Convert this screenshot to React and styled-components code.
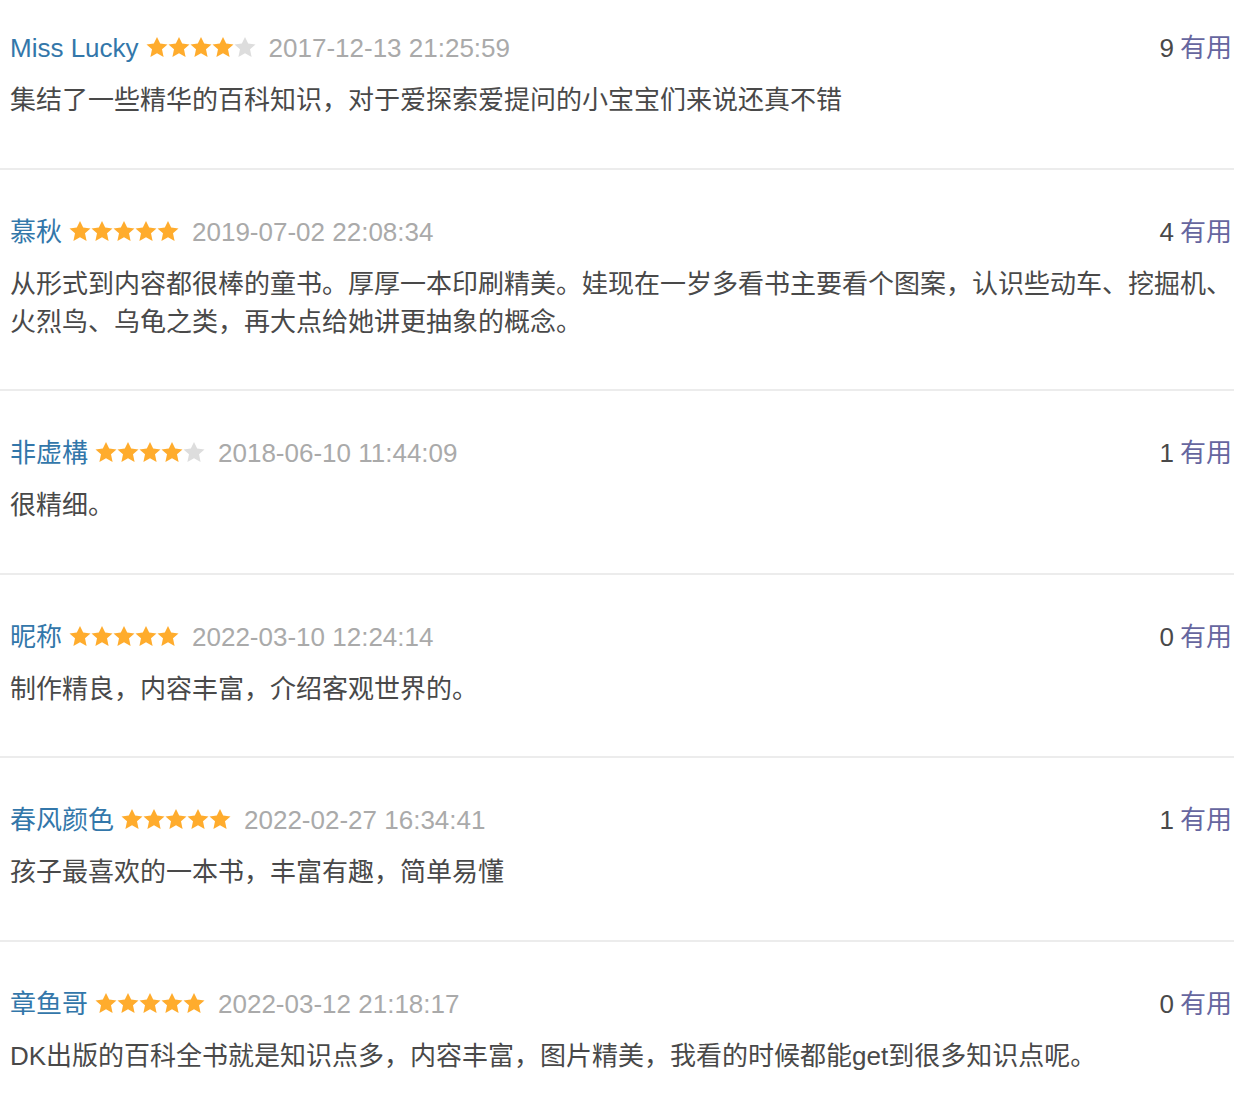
import React from "react";
import styled, { createGlobalStyle } from "styled-components";

const Global = createGlobalStyle`
  html, body { margin: 0; padding: 0; background: #fff; }
  body { font-family: "Liberation Sans", "Noto Sans CJK SC", sans-serif; }
`;

const List = styled.div`
  width: 1234px;
  padding-top: 29px;
`;

const Item = styled.div`
  padding: 43px 2px 48.5px 10px;
  border-bottom: 2px solid #ececec;
  &:first-child { padding-top: 0; }
  &:last-child { border-bottom: none; }
`;

const Header = styled.div`
  display: flex;
  align-items: center;
  justify-content: space-between;
  height: 38px;
  font-size: 26px;
  line-height: 38px;
`;

const Info = styled.div`
  display: flex;
  align-items: center;
`;

const Name = styled.span`
  color: #3377aa;
`;

const Stars = styled.span`
  display: inline-flex;
  margin: 0 13px 0 7px;
  position: relative;
  top: -1px;
`;

const Date = styled.span`
  color: #aaaaaa;
`;

const Votes = styled.div`
  color: #494949;
`;

const Useful = styled.span`
  color: #66669f;
  margin-left: 6px;
`;

const Content = styled.p`
  margin: 14px 0 0;
  font-size: 26px;
  line-height: 38px;
  color: #494949;
`;

const Star = ({ on }) => (
  <svg width="22" height="22" viewBox="0 0 22 22">
    <polygon
      points="11,1 14.2,7.6 21.5,8.4 16,13.3 17.6,21 11,17.2 4.4,21 6,13.3 0.5,8.4 7.8,7.6"
      fill={on ? "#ffac2d" : "#dddddd"}
    />
  </svg>
);

const reviews = [
  { name: "Miss Lucky", stars: 4, date: "2017-12-13 21:25:59", votes: 9, text: "集结了一些精华的百科知识，对于爱探索爱提问的小宝宝们来说还真不错" },
  { name: "慕秋", stars: 5, date: "2019-07-02 22:08:34", votes: 4, text: "从形式到内容都很棒的童书。厚厚一本印刷精美。娃现在一岁多看书主要看个图案，认识些动车、挖掘机、火烈鸟、乌龟之类，再大点给她讲更抽象的概念。" },
  { name: "非虚構", stars: 4, date: "2018-06-10 11:44:09", votes: 1, text: "很精细。" },
  { name: "昵称", stars: 5, date: "2022-03-10 12:24:14", votes: 0, text: "制作精良，内容丰富，介绍客观世界的。" },
  { name: "春风颜色", stars: 5, date: "2022-02-27 16:34:41", votes: 1, text: "孩子最喜欢的一本书，丰富有趣，简单易懂" },
  { name: "章鱼哥", stars: 5, date: "2022-03-12 21:18:17", votes: 0, text: "DK出版的百科全书就是知识点多，内容丰富，图片精美，我看的时候都能get到很多知识点呢。" },
];

export default function App() {
  return (
    <>
      <Global />
      <List>
        {reviews.map((r, i) => (
          <Item key={i}>
            <Header>
              <Info>
                <Name>{r.name}</Name>
                <Stars>
                  {[0, 1, 2, 3, 4].map((k) => (
                    <Star key={k} on={k < r.stars} />
                  ))}
                </Stars>
                <Date>{r.date}</Date>
              </Info>
              <Votes>
                {r.votes}
                <Useful>有用</Useful>
              </Votes>
            </Header>
            <Content>{r.text}</Content>
          </Item>
        ))}
      </List>
    </>
  );
}
